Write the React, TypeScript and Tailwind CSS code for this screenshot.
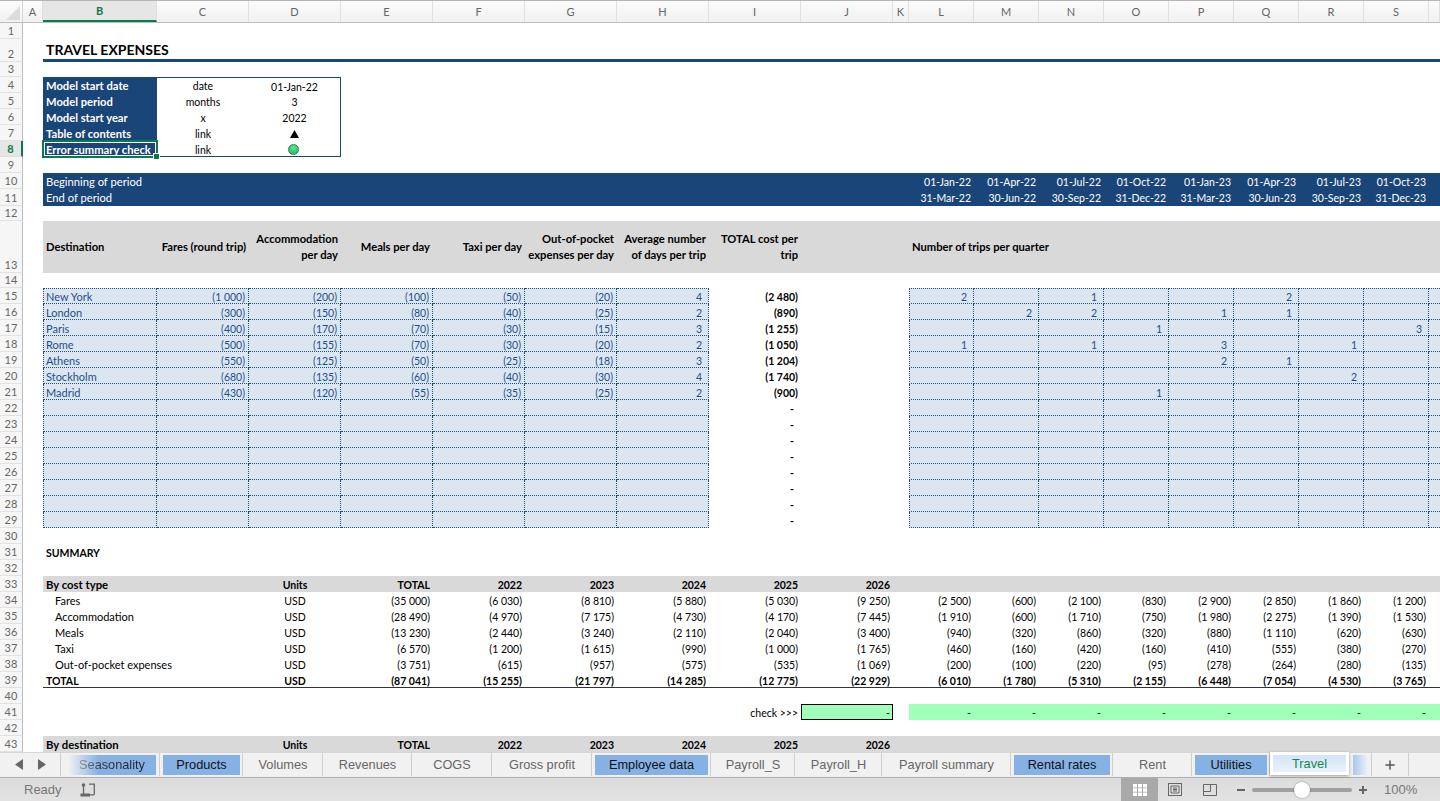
import type { ReactNode } from "react";
import { Plus } from "lucide-react";

const COLS =
  "grid grid-cols-[23px_20px_114px_92px_92px_92px_92px_92px_92px_92px_92px_16px_65px_65px_65px_65px_65px_65px_65px_65px_11px]";
const DOT = "border-b border-dotted border-[#1f4e8c]";

const heads = ["A", "B", "C", "D", "E", "F", "G", "H", "I", "J", "K", "L", "M", "N", "O", "P", "Q", "R", "S", ""];

const starts = ["01-Jan-22", "01-Apr-22", "01-Jul-22", "01-Oct-22", "01-Jan-23", "01-Apr-23", "01-Jul-23", "01-Oct-23"];
const ends = ["31-Mar-22", "30-Jun-22", "30-Sep-22", "31-Dec-22", "31-Mar-23", "30-Jun-23", "30-Sep-23", "31-Dec-23"];

const destinations = [
  ["New York", "(1 000)", "(200)", "(100)", "(50)", "(20)", "4", "(2 480)"],
  ["London", "(300)", "(150)", "(80)", "(40)", "(25)", "2", "(890)"],
  ["Paris", "(400)", "(170)", "(70)", "(30)", "(15)", "3", "(1 255)"],
  ["Rome", "(500)", "(155)", "(70)", "(30)", "(20)", "2", "(1 050)"],
  ["Athens", "(550)", "(125)", "(50)", "(25)", "(18)", "3", "(1 204)"],
  ["Stockholm", "(680)", "(135)", "(60)", "(40)", "(30)", "4", "(1 740)"],
  ["Madrid", "(430)", "(120)", "(55)", "(35)", "(25)", "2", "(900)"],
  ["", "", "", "", "", "", "", "-"],
  ["", "", "", "", "", "", "", "-"],
  ["", "", "", "", "", "", "", "-"],
  ["", "", "", "", "", "", "", "-"],
  ["", "", "", "", "", "", "", "-"],
  ["", "", "", "", "", "", "", "-"],
  ["", "", "", "", "", "", "", "-"],
  ["", "", "", "", "", "", "", "-"],
];

const trips = [
  ["2", "", "1", "", "", "2", "", ""],
  ["", "2", "2", "", "1", "1", "", ""],
  ["", "", "", "1", "", "", "", "3"],
  ["1", "", "1", "", "3", "", "1", ""],
  ["", "", "", "", "2", "1", "", ""],
  ["", "", "", "", "", "", "2", ""],
  ["", "", "", "1", "", "", "", ""],
];

const summary = [
  { label: "Fares", vals: ["(35 000)", "(6 030)", "(8 810)", "(5 880)", "(5 030)", "(9 250)"], q: ["(2 500)", "(600)", "(2 100)", "(830)", "(2 900)", "(2 850)", "(1 860)", "(1 200)"] },
  { label: "Accommodation", vals: ["(28 490)", "(4 970)", "(7 175)", "(4 730)", "(4 170)", "(7 445)"], q: ["(1 910)", "(600)", "(1 710)", "(750)", "(1 980)", "(2 275)", "(1 390)", "(1 530)"] },
  { label: "Meals", vals: ["(13 230)", "(2 440)", "(3 240)", "(2 110)", "(2 040)", "(3 400)"], q: ["(940)", "(320)", "(860)", "(320)", "(880)", "(1 110)", "(620)", "(630)"] },
  { label: "Taxi", vals: ["(6 570)", "(1 200)", "(1 615)", "(990)", "(1 000)", "(1 765)"], q: ["(460)", "(160)", "(420)", "(160)", "(410)", "(555)", "(380)", "(270)"] },
  { label: "Out-of-pocket expenses", vals: ["(3 751)", "(615)", "(957)", "(575)", "(535)", "(1 069)"], q: ["(200)", "(100)", "(220)", "(95)", "(278)", "(264)", "(280)", "(135)"] },
];

const years = ["TOTAL", "2022", "2023", "2024", "2025", "2026"];

const tabs = [
  { name: "Products", w: "w-[83px]", on: true },
  { name: "Volumes", w: "w-[80px]" },
  { name: "Revenues", w: "w-[89px]" },
  { name: "COGS", w: "w-[80px]" },
  { name: "Gross profit", w: "w-[100px]" },
  { name: "Employee data", w: "w-[119px]", on: true },
  { name: "Payroll_S", w: "w-[84px]" },
  { name: "Payroll_H", w: "w-[87px]" },
  { name: "Payroll summary", w: "w-[129px]" },
  { name: "Rental rates", w: "w-[102px]", on: true },
  { name: "Rent", w: "w-[79px]" },
  { name: "Utilities", w: "w-[78px]", on: true },
];

function Row({ n, h = "h-4", band = "", active, children }: { n: number; h?: string; band?: string; active?: boolean; children?: ReactNode }) {
  return (
    <div className={`${COLS} grid-rows-[minmax(0,1fr)] ${h}`}>
      <div
        className={`flex items-end justify-center border-b border-r text-[11px] leading-[15px] ${
          active ? "border-r-2 border-b-[#dedede] border-r-[#0b7a4b] bg-[#e6e6e6] font-bold text-[#0b7a4b]" : "border-b-[#e2e2e2] border-r-[#bdbdbd] bg-[#f6f6f6] text-[#666]"
        }`}
      >
        {n}
      </div>
      <div />
      <div className={`col-[3/-1] grid grid-cols-subgrid grid-rows-[minmax(0,1fr)] leading-[18px] ${band}`}>{children}</div>
    </div>
  );
}

// labels run a little larger than figures: Lato's digits are wide next to Calibri's
function L({ children, className = "" }: { children?: ReactNode; className?: string }) {
  return <div className={`whitespace-nowrap pl-[3px] text-left text-[11px] ${className}`}>{children}</div>;
}
function R({ children, className = "" }: { children?: ReactNode; className?: string }) {
  return <div className={`whitespace-nowrap pr-[3px] text-right ${className}`}>{children}</div>;
}
function C({ children, className = "" }: { children?: ReactNode; className?: string }) {
  return <div className={`whitespace-nowrap text-center ${className}`}>{children}</div>;
}

function ModelRow({ n, label, unit, children, first, last, active }: { n: number; label: string; unit: string; children: ReactNode; first?: boolean; last?: boolean; active?: boolean }) {
  const edge = `${first ? "border-t leading-4" : ""} ${last ? "border-b" : ""} border-[#1a4579]`;
  return (
    <Row n={n} active={active}>
      <div className="relative bg-[#1a4579] pl-[3px] text-[11.2px] font-bold text-white">
        {label}
        {active && (
          <div className="absolute -inset-x-px -inset-y-px border-2 border-[#0b7a4b] outline outline-white -outline-offset-3">
            <div className="absolute -bottom-[3px] -right-[3px] h-[5px] w-[5px] bg-[#0b7a4b] outline outline-white" />
          </div>
        )}
      </div>
      <C className={edge}>{unit}</C>
      <C className={`${edge} flex items-center justify-center border-r pt-[2px]`}>{children}</C>
    </Row>
  );
}

function DestRow({ n, d, t }: { n: number; d: string[]; t: string[] }) {
  const first = n === 15;
  const cell = `${DOT} bg-[#dce6f1] text-[#1f4e8c] border-r ${first ? "border-t leading-4" : ""}`;
  return (
    <Row n={n}>
      <L className={`${cell} border-l pl-[2px]!`}>{d[0]}</L>
      {d.slice(1, 6).map((v, i) => (
        <R key={i} className={cell}>{v}</R>
      ))}
      <R className={`${cell} pr-[6px]!`}>{d[6]}</R>
      <R className={`font-bold ${d[7] === "-" ? "pr-[7px]!" : ""}`}>{d[7]}</R>
      <div />
      <div />
      {Array.from({ length: 8 }).map((_, i) => (
        <R key={i} className={`${cell} pr-[6px]! ${i === 0 ? "border-l" : ""}`}>{t[i]}</R>
      ))}
      <div className={`${DOT} bg-[#dce6f1] ${first ? "border-t" : ""}`} />
    </Row>
  );
}

function TableHead({ n, label }: { n: number; label: string }) {
  return (
    <Row n={n} band="bg-[#d9d9d9] font-bold">
      <L className="text-[11.3px]!">{label}</L>
      <div />
      <C>Units</C>
      {years.map((y) => (
        <R key={y}>{y}</R>
      ))}
    </Row>
  );
}

function SumRow({ n, label, vals, q, bold }: { n: number; label: string; vals: string[]; q: string[]; bold?: boolean }) {
  return (
    <Row n={n} band={bold ? "font-bold border-b border-[#333]" : ""}>
      <L className={bold ? "text-[10.5px]!" : "pl-[12px]!"}>{label}</L>
      <div />
      <C>USD</C>
      {vals.map((v, i) => (
        <R key={i}>{v}</R>
      ))}
      <div />
      {q.map((v, i) => (
        <R key={i}>{v}</R>
      ))}
    </Row>
  );
}

function Tab({ name, w, on }: { name: string; w: string; on?: boolean }) {
  return (
    <div className={`${w} flex h-[23px] items-center border-r border-[#d0d0d0] pb-[2px] pl-[3px] pr-[2px] pt-[2px]`}>
      <div className={`flex h-5 w-full items-center justify-center ${on ? "bg-[#86b1e4] text-[#111]" : "text-[#666]"}`}>{name}</div>
    </div>
  );
}

export default function App() {
  const blue = "bg-[#1a4579] text-white";
  return (
    <div className="flex h-[801px] w-[1440px] flex-col overflow-hidden bg-white font-['Lato',sans-serif] text-[10.5px] leading-4 text-black">
      {/* column letters */}
      <div className={`${COLS} h-[23px] shrink-0 border-b border-t border-b-[#bdbdbd] border-t-[#b5b5b5] bg-gradient-to-b from-[#fbfbfb] to-[#f1f1f1] text-[11px] text-[#666]`}>
        <div className="relative border-r border-[#d8d8d8]">
          <div className="absolute bottom-[2px] right-[2px] h-0 w-0 border-b-[14px] border-l-[14px] border-b-[#dcdcdc] border-l-transparent" />
        </div>
        {heads.map((h) => (
          <div
            key={h}
            className={`flex items-center justify-center border-r border-[#e0e0e0] ${h === "B" ? "border-b-2 border-b-[#0b7a4b] bg-[#e6e6e6] font-bold text-[#0b7a4b]" : ""}`}
          >
            {h}
          </div>
        ))}
      </div>

      {/* sheet */}
      <div className="min-h-0 flex-1 overflow-hidden">
        <Row n={1} />
        <Row n={2} h="h-[23px]" band="border-b-[3px] border-[#1a4579]">
          <L className="text-[14px]! font-bold leading-[21px]!">TRAVEL EXPENSES</L>
        </Row>
        <Row n={3} h="h-[15px]" />
        <ModelRow n={4} label="Model start date" unit="date" first>
          01-Jan-22
        </ModelRow>
        <ModelRow n={5} label="Model period" unit="months">
          3
        </ModelRow>
        <ModelRow n={6} label="Model start year" unit="x">
          2022
        </ModelRow>
        <ModelRow n={7} label="Table of contents" unit="link">
          <svg width="9" height="8" viewBox="0 0 9 8">
            <path d="M4.5 0L9 8H0z" fill="#000" />
          </svg>
        </ModelRow>
        <ModelRow n={8} label="Error summary check" unit="link" last active>
          <div className="-ml-[2px] h-[11px] w-[11px] rounded-full border border-[#1c8a4a] bg-[radial-gradient(circle_at_50%_30%,#6be39a,#14b05a)]" />
        </ModelRow>
        <Row n={9} />
        <Row n={10} band={blue}>
          <L className="text-[11.2px]!">Beginning of period</L>
          {Array.from({ length: 9 }).map((_, i) => (
            <div key={i} />
          ))}
          {starts.map((d) => (
            <R key={d}>{d}</R>
          ))}
        </Row>
        <Row n={11} h="h-[17px]" band={blue}>
          <L className="text-[11.2px]!">End of period</L>
          {Array.from({ length: 9 }).map((_, i) => (
            <div key={i} />
          ))}
          {ends.map((d) => (
            <R key={d}>{d}</R>
          ))}
        </Row>
        <Row n={12} h="h-[15px]" />
        <Row n={13} h="h-[52px]" band="bg-[#d9d9d9] font-bold items-center text-[11.2px] leading-4!">
          <L className="text-[11.2px]!">Destination</L>
          <R>Fares (round trip)</R>
          <R>Accommodation<br />per day</R>
          <R>Meals per day</R>
          <R>Taxi per day</R>
          <R>Out-of-pocket<br />expenses per day</R>
          <R>Average number<br />of days per trip</R>
          <R>TOTAL cost per<br />trip</R>
          <div />
          <div />
          <L className="text-[11.2px]!">Number of trips per quarter</L>
        </Row>
        <Row n={14} h="h-[15px]" />
        {destinations.map((d, i) => (
          <DestRow key={i} n={15 + i} d={d} t={trips[i] ?? ["", "", "", "", "", "", "", ""]} />
        ))}
        <Row n={30} />
        <Row n={31}>
          <L className="text-[10.5px]! font-bold">SUMMARY</L>
        </Row>
        <Row n={32} />
        <TableHead n={33} label="By cost type" />
        {summary.map((s, i) => (
          <SumRow key={s.label} n={34 + i} label={s.label} vals={s.vals} q={s.q} />
        ))}
        <SumRow
          n={39}
          label="TOTAL"
          bold
          vals={["(87 041)", "(15 255)", "(21 797)", "(14 285)", "(12 775)", "(22 929)"]}
          q={["(6 010)", "(1 780)", "(5 310)", "(2 155)", "(6 448)", "(7 054)", "(4 530)", "(3 765)"]}
        />
        <Row n={40} />
        <Row n={41}>
          {Array.from({ length: 7 }).map((_, i) => (
            <div key={i} />
          ))}
          <R>check &gt;&gt;&gt;</R>
          <R className="border border-black bg-[#a0ffb9] pr-[2px]! leading-4">-</R>
          <div />
          {Array.from({ length: 8 }).map((_, i) => (
            <R key={i} className="bg-[#a0ffb9]">-</R>
          ))}
          <div className="bg-[#a0ffb9]" />
        </Row>
        <Row n={42} />
        <TableHead n={43} label="By destination" />
      </div>

      {/* sheet tabs */}
      <div className="flex h-[26px] shrink-0 border-b border-t border-b-[#aeaeae] border-t-[#d6d6d6] bg-[#f1f1f1] font-['Liberation_Sans',sans-serif] text-[12.75px]">
        <div className="flex h-[23px] w-[61px] items-center border-r border-[#d0d0d0] pl-[15px]">
          <svg width="8" height="11" viewBox="0 0 8 11">
            <path d="M8 0v11L0 5.5z" fill="#666" />
          </svg>
          <svg className="ml-[15px]" width="8" height="11" viewBox="0 0 8 11">
            <path d="M0 0v11l8-5.5z" fill="#666" />
          </svg>
        </div>
        <div className="flex h-[23px] w-[99px] items-center border-r border-[#d0d0d0] pb-[2px] pl-[7px] pr-[3px] pt-[2px]">
          <div className="flex h-5 w-full items-center justify-center bg-gradient-to-r from-[#f1f1f1] via-[#86b1e4] via-35% to-[#86b1e4]">
            <span className="bg-gradient-to-r from-[#999] via-[#333] via-35% to-[#222] bg-clip-text text-transparent">Seasonality</span>
          </div>
        </div>
        {tabs.map((t) => (
          <Tab key={t.name} {...t} />
        ))}
        <div className="z-10 -mt-px flex h-[23px] w-[79px] shrink-0 items-center justify-center bg-white px-[3px] shadow-[0_1px_3px_rgba(0,0,0,0.35)]">
          <div className="flex h-[17px] w-full items-center justify-center bg-gradient-to-b from-[#d6e4f7] to-[#eaf1fb] font-medium text-[#0b8a52]">Travel</div>
        </div>
        <div className="flex h-[23px] w-[23px] items-center border-r border-[#d0d0d0] pb-[2px] pl-[4px] pr-[3px] pt-[2px]">
          <div className="h-5 w-full bg-gradient-to-r from-[#a9c6ec] to-[#eef2f7]" />
        </div>
        <div className="flex h-[23px] w-[37px] items-center justify-center border-r border-[#d0d0d0] text-[#555]">
          <Plus size={14} strokeWidth={2.5} />
        </div>
      </div>

      {/* status bar */}
      <div className="flex h-[23px] shrink-0 items-center bg-gradient-to-b from-[#dcdcdc] to-[#e2e2e2] font-['Liberation_Sans',sans-serif] text-[13px] text-[#777]">
        <span className="ml-[24px] w-[56px]">Ready</span>
        <svg width="16" height="14" viewBox="0 0 16 14" fill="none" stroke="#666" strokeWidth="1.3">
          <circle cx="3.5" cy="2" r="1.8" fill="#666" stroke="none" />
          <path d="M3.5 3v8M9 1.2h5.3v9.5c0 .8-.5 1.2-1.3 1.2H10" />
          <rect x="0.5" y="10.5" width="9.5" height="3" fill="#666" stroke="none" />
        </svg>
        <div className="ml-[1025px] flex h-[23px] w-[37px] items-center justify-center bg-[#a9a9a9]">
          <svg width="14" height="12" viewBox="0 0 14 12" fill="#fff">
            <path d="M0 0h4v3.5H0zM5 0h4v3.5H5zM10 0h4v3.5h-4zM0 4.3h4v3.4H0zM5 4.3h4v3.4H5zM10 4.3h4v3.4h-4zM0 8.5h4V12H0zM5 8.5h4V12H5zM10 8.5h4V12h-4z" />
          </svg>
        </div>
        <svg className="ml-[10px]" width="14" height="13" viewBox="0 0 14 13" fill="none" stroke="#666" strokeWidth="1">
          <rect x=".5" y=".5" width="13" height="12" />
          <path d="M3 3h8v7H3zM5 5h4M5 6.5h4M5 8h4" />
        </svg>
        <svg className="ml-[21px]" width="14" height="12" viewBox="0 0 14 12" fill="none" stroke="#666" strokeWidth="1">
          <path d="M.5 .5h13v11H.5zM.5 7.5h7V.5" />
        </svg>
        <div className="ml-[20px] h-[2px] w-[8px] bg-[#666]" />
        <div className="relative ml-[7px] h-[4px] w-[100px] rounded-full bg-[#a0a0a0]">
          <div className="absolute -top-[6px] left-[42px] h-4 w-4 rounded-full bg-white shadow-[0_0_2px_rgba(0,0,0,0.4)]" />
        </div>
        <svg className="ml-[7px]" width="8" height="8" viewBox="0 0 8 8" fill="#666">
          <path d="M3 0h2v3h3v2H5v3H3V5H0V3h3z" />
        </svg>
        <span className="ml-[17px]">100%</span>
      </div>
    </div>
  );
}
